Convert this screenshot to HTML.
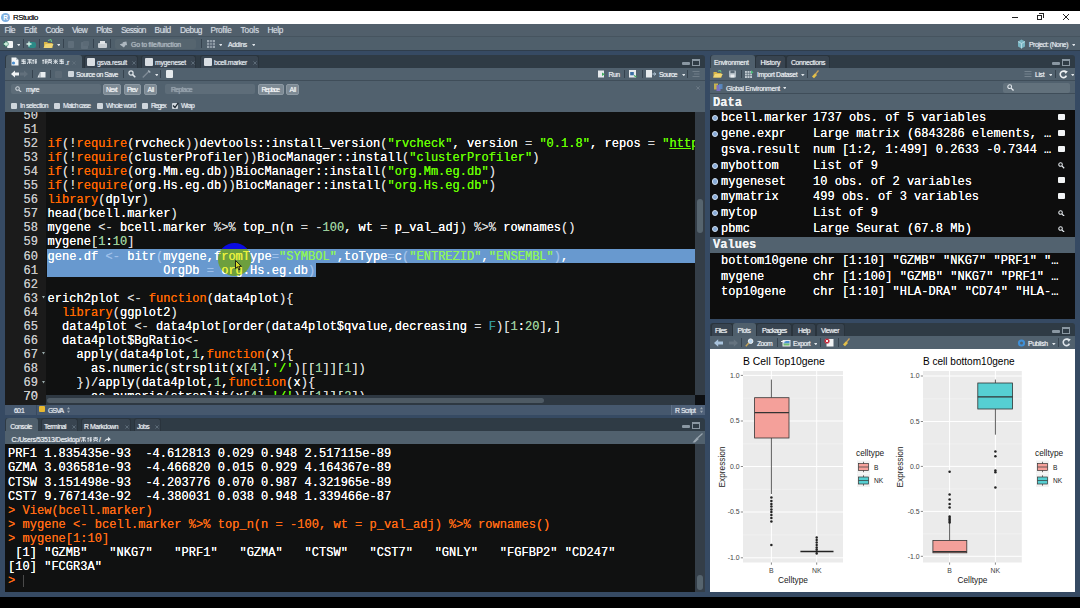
<!DOCTYPE html><html><head><meta charset="utf-8"><title>RStudio</title>
<style>
*{margin:0;padding:0;box-sizing:border-box}
html,body{width:1080px;height:608px;overflow:hidden;background:#000}
body{position:relative;font-family:"Liberation Sans",sans-serif;font-size:8px;color:#e4e9ee}
.a{position:absolute}
.t{position:absolute;white-space:pre;line-height:1}
.mono{font-family:"Liberation Mono",monospace}
.ui{font-size:8px;color:#e4e9ee;text-shadow:0 0 0.7px rgba(230,236,241,.75)}
.k{color:#ff6600}.s{color:#66ff00}.n{color:#9c9}.c{color:#399}.o{color:#d6d6d6}
.sel .o{color:#9ec0ea}.sel .s{color:#8df55a}
.cl{position:absolute;left:48px;height:14px;line-height:14px;font:12px/14px "Liberation Mono",monospace;white-space:pre;color:#fff;letter-spacing:0.03px;text-shadow:0 0 0.6px currentColor}
.ln{position:absolute;left:0;width:33px;text-align:right;height:14px;font:12px/14px "Liberation Mono",monospace;color:#c8c8c8;text-shadow:0 0 0.6px currentColor}
.con{position:absolute;left:3px;height:14px;font:12px/14px "Liberation Mono",monospace;white-space:pre;color:#fff;letter-spacing:0.03px;text-shadow:0 0 0.6px currentColor}
.ci{color:#ff6a14}
.env{position:absolute;font:12px/16px "Liberation Mono",monospace;white-space:pre;color:#fff;height:16px;letter-spacing:0.02px;text-shadow:0 0 0.6px currentColor}
.sep{position:absolute;width:1px;background:#36434f}
.pl{font-family:"Liberation Sans",sans-serif;color:#222}
</style></head><body>

<div class="a" style="left:0;top:11px;width:1080px;height:13px;background:#fff"></div>
<div class="a" style="left:0.8px;top:13.2px;width:8.8px;height:8.8px;border-radius:50%;background:#7fb0e0"></div>
<div class="t" style="left:3.2px;top:14.6px;font-size:6.5px;font-weight:bold;color:#fff">R</div>
<div class="t" style="left:13px;top:13.7px;font-size:7.8px;color:#151515;letter-spacing:-0.393px;text-shadow:0 0 0.6px rgba(0,0,0,.7)">RStudio</div>
<div class="a" style="left:1012px;top:17px;width:6px;height:1px;background:#222"></div>
<div class="a" style="left:1037px;top:15px;width:5px;height:5px;border:1px solid #222"></div>
<div class="a" style="left:1039px;top:13px;width:5px;height:5px;border-top:1px solid #222;border-right:1px solid #222"></div>
<svg class="a" style="left:1062px;top:13px" width="8" height="8"><path d="M1 1L7 7M7 1L1 7" stroke="#222" stroke-width="1"/></svg>
<div class="a" style="left:0;top:24px;width:1080px;height:13px;background:#515f6b"></div>
<div class="t" style="left:4.6px;top:25.9px;font-size:8.3px;color:#d3dae0;letter-spacing:-0.794px;text-shadow:0 0 0.8px rgba(211,218,224,.6)">File</div>
<div class="t" style="left:24px;top:25.9px;font-size:8.3px;color:#d3dae0;letter-spacing:-0.451px;text-shadow:0 0 0.8px rgba(211,218,224,.6)">Edit</div>
<div class="t" style="left:45.6px;top:25.9px;font-size:8.3px;color:#d3dae0;letter-spacing:-0.611px;text-shadow:0 0 0.8px rgba(211,218,224,.6)">Code</div>
<div class="t" style="left:71.9px;top:25.9px;font-size:8.3px;color:#d3dae0;letter-spacing:-0.685px;text-shadow:0 0 0.8px rgba(211,218,224,.6)">View</div>
<div class="t" style="left:96.3px;top:25.9px;font-size:8.3px;color:#d3dae0;letter-spacing:-0.611px;text-shadow:0 0 0.8px rgba(211,218,224,.6)">Plots</div>
<div class="t" style="left:121px;top:25.9px;font-size:8.3px;color:#d3dae0;letter-spacing:-0.676px;text-shadow:0 0 0.8px rgba(211,218,224,.6)">Session</div>
<div class="t" style="left:154.6px;top:25.9px;font-size:8.3px;color:#d3dae0;letter-spacing:-0.471px;text-shadow:0 0 0.8px rgba(211,218,224,.6)">Build</div>
<div class="t" style="left:180px;top:25.9px;font-size:8.3px;color:#d3dae0;letter-spacing:-0.492px;text-shadow:0 0 0.8px rgba(211,218,224,.6)">Debug</div>
<div class="t" style="left:210.5px;top:25.9px;font-size:8.3px;color:#d3dae0;letter-spacing:-0.361px;text-shadow:0 0 0.8px rgba(211,218,224,.6)">Profile</div>
<div class="t" style="left:240.5px;top:25.9px;font-size:8.3px;color:#d3dae0;letter-spacing:-0.175px;text-shadow:0 0 0.8px rgba(211,218,224,.6)">Tools</div>
<div class="t" style="left:267.5px;top:25.9px;font-size:8.3px;color:#d3dae0;letter-spacing:-0.393px;text-shadow:0 0 0.8px rgba(211,218,224,.6)">Help</div>
<div class="a" style="left:0px;top:36.3px;width:1080px;height:0.9px;background:#46545f;"></div>
<div class="a" style="left:0;top:37px;width:1080px;height:14px;background:#4f5f6b;border-bottom:1px solid #2f3d4b"></div>
<div class="a" style="left:0;top:51px;width:1080px;height:546px;background:#364a63"></div>
<div class="a" style="left:6.6px;top:41px;width:6.4px;height:7px;background:#f2f4f5;border-radius:1px"></div>
<svg class="a" style="left:3.2px;top:40.5px;" width="6" height="6" viewBox="0 0 6 6"><path d="M3 0.5V5.5M0.5 3H5.5" stroke="#0f6a4a" stroke-width="2.6"/><path d="M3 0.8V5.2M0.8 3H5.2" stroke="#e2f7ea" stroke-width="1.3"/></svg>
<svg class="a" style="left:16.8px;top:44.1px;" width="3.6" height="2.3" viewBox="0 0 3.6 2.3"><path d="M0 0H3.6L1.8 2.3Z" fill="#dfe5ea"/></svg>
<div class="sep" style="left:23px;top:39px;height:9px"></div>
<div class="a" style="left:27.5px;top:41.6px;width:8.5px;height:6.8px;background:#2b8a86;border-radius:2px"></div>
<svg class="a" style="left:26.3px;top:40.6px;" width="6" height="6" viewBox="0 0 6 6"><path d="M3 0.5V5.5M0.5 3H5.5" stroke="#d9f5ea" stroke-width="1.3"/></svg>
<div class="sep" style="left:39px;top:39px;height:9px"></div>
<svg class="a" style="left:43px;top:39px;" width="11" height="10" viewBox="0 0 11 10"><path d="M1 3H4L5 4H9.5V9H1Z" fill="#d9b74a"/><path d="M0.5 9L2.5 5H10.5L8.5 9Z" fill="#f0d777"/><path d="M5 1.5L8 0.5L8.5 3" fill="none" stroke="#6fd08a" stroke-width="1"/></svg>
<svg class="a" style="left:56.8px;top:44.1px;" width="3.6" height="2.3" viewBox="0 0 3.6 2.3"><path d="M0 0H3.6L1.8 2.3Z" fill="#dfe5ea"/></svg>
<div class="sep" style="left:62.5px;top:39px;height:9px"></div>
<div class="a" style="left:67.5px;top:41px;width:6.5px;height:7px;background:#5f6e7a;border-radius:1px"></div>
<div class="a" style="left:81px;top:42px;width:6.5px;height:6.5px;background:#5f6e7a;border-radius:1px"></div>
<div class="a" style="left:83px;top:40.5px;width:5.5px;height:5.5px;background:#5b6a76;border-radius:1px"></div>
<div class="sep" style="left:93px;top:39px;height:9px"></div>
<div class="a" style="left:98.3px;top:43px;width:8.4px;height:4.6px;background:#c7cdd2;border-radius:1px"></div>
<div class="a" style="left:100.2px;top:40.5px;width:4.6px;height:3.5px;background:#dfe3e6;"></div>
<div class="sep" style="left:109.5px;top:39px;height:9px"></div>
<div class="a" style="left:115px;top:39px;width:81px;height:10px;background:#56656f;border-radius:2px"></div>
<svg class="a" style="left:120px;top:40px;" width="8" height="8" viewBox="0 0 8 8"><path d="M0.5 7L3 3.5L1.5 3.5L4.5 0.5L7.5 3.5L6 3.5L6 7" fill="#aeb8c0" transform="rotate(35 4 4)"/></svg>
<div class="t ui" style="left:131px;top:41.5px;font-size:6.9px;color:#aab5bd;letter-spacing:-0.195px;">Go to file/function</div>
<div class="sep" style="left:201px;top:39px;height:9px"></div>
<svg class="a" style="left:207px;top:40px;" width="8" height="8" viewBox="0 0 8 8"><rect x="0" y="0" width="8" height="8" fill="#9aa6b0"/><path d="M0 2.7H8M0 5.3H8M2.7 0V8M5.3 0V8" stroke="#475664" stroke-width="0.8"/></svg>
<svg class="a" style="left:218.8px;top:44.1px;" width="3.6" height="2.3" viewBox="0 0 3.6 2.3"><path d="M0 0H3.6L1.8 2.3Z" fill="#dfe5ea"/></svg>
<div class="t ui" style="left:228px;top:41.5px;font-size:6.9px;letter-spacing:-0.350px;">Addins</div>
<svg class="a" style="left:251.8px;top:44.1px;" width="3.6" height="2.3" viewBox="0 0 3.6 2.3"><path d="M0 0H3.6L1.8 2.3Z" fill="#dfe5ea"/></svg>
<svg class="a" style="left:1016.8px;top:39px;" width="9" height="10" viewBox="0 0 9 10"><path d="M1 2.5L4.5 0.5L8 2.5V7.5L4.5 9.5L1 7.5Z" fill="#78b4c2"/><path d="M1 2.5L4.5 4.5L8 2.5M4.5 4.5V9.5" stroke="#cfeaf0" stroke-width="0.7" fill="none"/></svg>
<div class="t ui" style="left:1029px;top:41.5px;font-size:6.9px;letter-spacing:-0.493px;">Project: (None)</div>
<svg class="a" style="left:1071.8px;top:44.1px;" width="3.6" height="2.3" viewBox="0 0 3.6 2.3"><path d="M0 0H3.6L1.8 2.3Z" fill="#dfe5ea"/></svg>
<div class="a" style="left:5px;top:55px;width:700px;height:360px;background:#2f3b45;border-radius:3px 3px 0 0"></div>
<div class="a" style="left:6px;top:55px;width:76px;height:13px;background:#4f5f6c;border-radius:3px 3px 0 0;"></div>
<svg class="a" style="left:11px;top:57px;" width="8" height="9" viewBox="0 0 8 9"><path d="M0.5 0.5H5L7.5 3V8.5H0.5Z" fill="#f4f6f7"/><path d="M5 0.5V3H7.5" fill="#b9c4cd"/><circle cx="2.5" cy="6" r="1.6" fill="#4b8fd0"/></svg>
<svg class="a" style="left:21px;top:59.3px;" width="5.3" height="5.3" viewBox="0 0 5.3 5.3"><g transform="scale(0.757143)"><path d="M0.5 1.2H6.5M0.8 3.4H6.2M0.5 5.8H6.5M3.5 0.2V6.8M1.6 1.2V3.4M5.4 3.4V5.8" stroke="#e4e9ee" stroke-width="1.25" opacity="0.92" fill="none"/></g></svg>
<svg class="a" style="left:26.7px;top:59.3px;" width="5.3" height="5.3" viewBox="0 0 5.3 5.3"><g transform="scale(0.757143)"><path d="M0.6 0.8H6.4M1 2.6H6M3.5 0.8V6.6M1 4.4L0.4 6.6M6 4.4L6.6 6.6M1.8 4.4H5.2" stroke="#e4e9ee" stroke-width="1.25" opacity="0.92" fill="none"/></g></svg>
<svg class="a" style="left:32.4px;top:59.3px;" width="5.3" height="5.3" viewBox="0 0 5.3 5.3"><g transform="scale(0.757143)"><path d="M1.5 0.4V6.6M0.4 2H2.8M3.4 1H6.6M3.4 3H6.6M5 1V6.6M3.4 5H6.6" stroke="#e4e9ee" stroke-width="1.25" opacity="0.92" fill="none"/></g></svg>
<svg class="a" style="left:41.5px;top:59.3px;" width="5.3" height="5.3" viewBox="0 0 5.3 5.3"><g transform="scale(0.757143)"><path d="M1.5 0.4V6.6M0.4 2H2.8M3.4 1H6.6M3.4 3H6.6M5 1V6.6M3.4 5H6.6" stroke="#e4e9ee" stroke-width="1.25" opacity="0.92" fill="none"/></g></svg>
<svg class="a" style="left:47.25px;top:59.3px;" width="5.3" height="5.3" viewBox="0 0 5.3 5.3"><g transform="scale(0.757143)"><path d="M0.5 1H6.5M3.5 0.2V2.4M1 2.4H6V4.4H1ZM0.6 6.4L3 4.4M6.4 6.4L4 4.4" stroke="#e4e9ee" stroke-width="1.25" opacity="0.92" fill="none"/></g></svg>
<svg class="a" style="left:53px;top:59.3px;" width="5.3" height="5.3" viewBox="0 0 5.3 5.3"><g transform="scale(0.757143)"><path d="M0.6 3H6.4M3.5 0.4V6.6M1 0.8L2.4 2.2M6 0.8L4.6 2.2M0.6 6.4L3.2 3.6M6.4 6.4L3.8 3.6" stroke="#e4e9ee" stroke-width="1.25" opacity="0.92" fill="none"/></g></svg>
<svg class="a" style="left:58.75px;top:59.3px;" width="5.3" height="5.3" viewBox="0 0 5.3 5.3"><g transform="scale(0.757143)"><path d="M0.5 1.2H6.5M0.8 3.4H6.2M0.5 5.8H6.5M3.5 0.2V6.8M1.6 1.2V3.4M5.4 3.4V5.8" stroke="#e4e9ee" stroke-width="1.25" opacity="0.92" fill="none"/></g></svg>
<div class="t ui" style="left:65.2px;top:59.5px;font-size:6.9px;color:#e4e9ee;letter-spacing:-0.107px;">.r</div>
<svg class="a" style="left:71.8px;top:60.6px;" width="4" height="4" viewBox="0 0 4 4"><path d="M0.4 0.4L3.6 3.6M3.6 0.4L0.4 3.6" stroke="#62707d" stroke-width="0.9"/></svg>
<!--tabs-->
<div class="a" style="left:84px;top:55px;width:54px;height:13px;background:#384450;border-radius:3px 3px 0 0;border:1px solid #2a343d;border-bottom:none;"></div>
<div class="a" style="left:87px;top:57.5px;width:8px;height:8px;background:#d9dee3;border-radius:1px"></div>
<div class="t ui" style="left:97px;top:59.5px;font-size:6.9px;color:#e4e9ee;letter-spacing:-0.306px;">gsva.result</div>
<svg class="a" style="left:131.5px;top:60.6px;" width="4" height="4" viewBox="0 0 4 4"><path d="M0.4 0.4L3.6 3.6M3.6 0.4L0.4 3.6" stroke="#62707d" stroke-width="0.9"/></svg>
<div class="a" style="left:141px;top:55px;width:55px;height:13px;background:#384450;border-radius:3px 3px 0 0;border:1px solid #2a343d;border-bottom:none;"></div>
<div class="a" style="left:145px;top:57.5px;width:8px;height:8px;background:#d9dee3;border-radius:1px"></div>
<div class="t ui" style="left:155px;top:59.5px;font-size:6.9px;color:#e4e9ee;letter-spacing:-0.306px;">mygeneset</div>
<svg class="a" style="left:190.5px;top:60.6px;" width="4" height="4" viewBox="0 0 4 4"><path d="M0.4 0.4L3.6 3.6M3.6 0.4L0.4 3.6" stroke="#62707d" stroke-width="0.9"/></svg>
<div class="a" style="left:200px;top:55px;width:59px;height:13px;background:#384450;border-radius:3px 3px 0 0;border:1px solid #2a343d;border-bottom:none;"></div>
<div class="a" style="left:204px;top:57.5px;width:8px;height:8px;background:#d9dee3;border-radius:1px"></div>
<div class="t ui" style="left:214px;top:59.5px;font-size:6.9px;color:#e4e9ee;letter-spacing:-0.381px;">bcell.marker</div>
<svg class="a" style="left:252.5px;top:60.6px;" width="4" height="4" viewBox="0 0 4 4"><path d="M0.4 0.4L3.6 3.6M3.6 0.4L0.4 3.6" stroke="#62707d" stroke-width="0.9"/></svg>
<div class="a" style="left:682px;top:62.3px;width:7.5px;height:3px;background:#8a97a2;border-radius:1px"></div>
<div class="a" style="left:692px;top:59px;width:8px;height:7px;border:1px solid #8a97a2;border-top-width:2px"></div>
<div class="a" style="left:5px;top:68px;width:700px;height:12px;background:#51616e;"></div>
<svg class="a" style="left:11px;top:70px;" width="8" height="8" viewBox="0 0 8 8"><path d="M0 4L4 0.5V2.5H8V5.5H4V7.5Z" fill="#f0f3f5"/></svg>
<svg class="a" style="left:20px;top:70px;" width="8" height="8" viewBox="0 0 8 8"><path d="M8 4L4 0.5V2.5H0V5.5H4V7.5Z" fill="#62707c"/></svg>
<div class="sep" style="left:32px;top:70px;height:8px"></div>
<svg class="a" style="left:37px;top:70px;" width="9" height="8" viewBox="0 0 9 8"><path d="M0.5 7.5L3 2H8.5V7.5Z" fill="#e9edf0"/><path d="M3 2V7.5" stroke="#51616e" stroke-width="0.6"/></svg>
<div class="sep" style="left:50px;top:70px;height:8px"></div>
<div class="a" style="left:55px;top:70.5px;width:6.5px;height:7.5px;background:#5b6975;border-radius:1px"></div>
<div class="a" style="left:68px;top:71px;width:6px;height:6px;background:#cfd6dc;border-radius:1px"></div>
<div class="t ui" style="left:76px;top:72px;font-size:6.9px;color:#eef1f3;letter-spacing:-0.507px;">Source on Save</div>
<div class="sep" style="left:123px;top:70px;height:8px"></div>
<svg class="a" style="left:128px;top:70px;" width="8" height="8" viewBox="0 0 8 8"><g transform="scale(1)"><circle cx="3" cy="3" r="2.1" fill="none" stroke="#dfe5ea" stroke-width="1.2"/><path d="M4.6 4.6L7.3 7.3" stroke="#dfe5ea" stroke-width="1.5"/></g></svg>
<svg class="a" style="left:142px;top:70px;" width="9" height="8" viewBox="0 0 9 8"><path d="M0.8 7.5L7 1.2" stroke="#7e8b96" stroke-width="1.3"/><path d="M6.2 0.5L8.3 2.4" stroke="#a7b2bb" stroke-width="1.4"/></svg>
<svg class="a" style="left:154.8px;top:74.1px;" width="3.6" height="2.3" viewBox="0 0 3.6 2.3"><path d="M0 0H3.6L1.8 2.3Z" fill="#dfe5ea"/></svg>
<div class="sep" style="left:160px;top:70px;height:8px"></div>
<div class="a" style="left:166px;top:70px;width:7px;height:8px;background:#e6eaed;border-radius:1px"></div>
<svg class="a" style="left:598px;top:70px;" width="7" height="8" viewBox="0 0 7 8"><rect x="0" y="0.5" width="6" height="7" fill="#e6eaed"/><path d="M4 2.5L7 4.2L4 6Z" fill="#3fae5f"/></svg>
<div class="t ui" style="left:608.5px;top:72px;font-size:6.9px;color:#eef1f3;letter-spacing:-0.553px;">Run</div>
<div class="sep" style="left:624px;top:70px;height:8px"></div>
<svg class="a" style="left:628.5px;top:70px;" width="8" height="8" viewBox="0 0 8 8"><rect x="0" y="0" width="7" height="7.5" fill="#e6eaed"/><rect x="1.2" y="2" width="3.6" height="3.3" fill="#3a6ea5"/><path d="M5 5.5L7.5 7" stroke="#3fae5f" stroke-width="1.2"/></svg>
<div class="sep" style="left:642px;top:70px;height:8px"></div>
<svg class="a" style="left:646px;top:70px;" width="10" height="8" viewBox="0 0 10 8"><rect x="0" y="0" width="6" height="7.5" fill="#e6eaed"/><path d="M6.5 4H9.5M8.3 2.6L9.8 4L8.3 5.4" stroke="#bcd0e2" stroke-width="1" fill="none"/></svg>
<div class="t ui" style="left:659px;top:72px;font-size:6.9px;color:#eef1f3;letter-spacing:-0.644px;">Source</div>
<svg class="a" style="left:681.8px;top:74.1px;" width="3.6" height="2.3" viewBox="0 0 3.6 2.3"><path d="M0 0H3.6L1.8 2.3Z" fill="#dfe5ea"/></svg>
<div class="sep" style="left:687px;top:70px;height:8px"></div>
<svg class="a" style="left:692px;top:70px;" width="8" height="8" viewBox="0 0 8 8"><path d="M0.5 1.5H7.5M2 4H7.5M0.5 6.5H7.5" stroke="#6f7d88" stroke-width="1.1"/></svg>
<div class="a" style="left:5px;top:80px;width:700px;height:32px;background:#51616e;border-top:1px solid #3f4d59"></div>
<div class="a" style="left:11px;top:84px;width:90px;height:10px;background:#5e6d79;border-radius:2px"></div>
<svg class="a" style="left:15px;top:85.5px;" width="6.8" height="6.8" viewBox="0 0 6.8 6.8"><g transform="scale(0.85)"><circle cx="3" cy="3" r="2.1" fill="none" stroke="#cfd6dc" stroke-width="1.2"/><path d="M4.6 4.6L7.3 7.3" stroke="#cfd6dc" stroke-width="1.5"/></g></svg>
<div class="t ui" style="left:26px;top:87px;font-size:6.9px;color:#eef1f3;letter-spacing:-0.583px;">myre</div>
<div class="a" style="left:103px;top:84px;width:18px;height:10.5px;background:#7d8a94;border-radius:2px;border:1px solid #8d99a3"></div>
<div class="t ui" style="left:106px;top:86.9px;font-size:6.9px;color:#f4f6f7;letter-spacing:-0.797px;">Next</div>
<div class="a" style="left:124px;top:84px;width:17px;height:10.5px;background:#7d8a94;border-radius:2px;border:1px solid #8d99a3"></div>
<div class="t ui" style="left:127px;top:86.9px;font-size:6.9px;color:#f4f6f7;letter-spacing:-1.047px;">Prev</div>
<div class="a" style="left:144px;top:84px;width:12.5px;height:10.5px;background:#7d8a94;border-radius:2px;border:1px solid #8d99a3"></div>
<div class="t ui" style="left:147.5px;top:86.9px;font-size:6.9px;color:#f4f6f7;letter-spacing:-0.390px;">All</div>
<div class="a" style="left:165px;top:84px;width:90px;height:10px;background:#5e6d79;border-radius:2px"></div>
<div class="t ui" style="left:171px;top:87px;font-size:6.9px;color:#8d9aa5;letter-spacing:-0.617px;">Replace</div>
<div class="a" style="left:258px;top:84px;width:26px;height:10.5px;background:#7d8a94;border-radius:2px;border:1px solid #8d99a3"></div>
<div class="t ui" style="left:261.5px;top:86.9px;font-size:6.9px;color:#f4f6f7;letter-spacing:-1.117px;">Replace</div>
<div class="a" style="left:286px;top:84px;width:13px;height:10.5px;background:#7d8a94;border-radius:2px;border:1px solid #8d99a3"></div>
<div class="t ui" style="left:289.5px;top:86.9px;font-size:6.9px;color:#f4f6f7;letter-spacing:-0.390px;">All</div>
<svg class="a" style="left:695.5px;top:85.6px;" width="4" height="4" viewBox="0 0 4 4"><path d="M0.4 0.4L3.6 3.6M3.6 0.4L0.4 3.6" stroke="#6f7d89" stroke-width="0.9"/></svg>
<div class="a" style="left:11px;top:102.5px;width:6px;height:6px;background:#cfd6dc;border-radius:1px"></div>
<div class="t ui" style="left:20px;top:103.1px;font-size:6.9px;color:#e4e9ee;letter-spacing:-0.575px;">In selection</div>
<div class="a" style="left:54px;top:102.5px;width:6px;height:6px;background:#cfd6dc;border-radius:1px"></div>
<div class="t ui" style="left:63px;top:103.1px;font-size:6.9px;color:#e4e9ee;letter-spacing:-0.788px;">Match case</div>
<div class="a" style="left:97px;top:102.5px;width:6px;height:6px;background:#cfd6dc;border-radius:1px"></div>
<div class="t ui" style="left:106px;top:103.1px;font-size:6.9px;color:#e4e9ee;letter-spacing:-0.663px;">Whole word</div>
<div class="a" style="left:142px;top:102.5px;width:6px;height:6px;background:#cfd6dc;border-radius:1px"></div>
<div class="t ui" style="left:151px;top:103.1px;font-size:6.9px;color:#e4e9ee;letter-spacing:-1.029px;">Regex</div>
<div class="a" style="left:171.5px;top:102.5px;width:6px;height:6px;background:#cfd6dc;border-radius:1px"></div>
<svg class="a" style="left:171.5px;top:101.5px;" width="7" height="7" viewBox="0 0 7 7"><path d="M1 3.5L3 5.5L6.3 0.8" fill="none" stroke="#1d2730" stroke-width="1.3"/></svg>
<div class="t ui" style="left:181px;top:103.1px;font-size:6.9px;color:#e4e9ee;letter-spacing:-0.840px;">Wrap</div>
<div class="a" style="left:5px;top:112px;width:690px;height:283px;background:#101111;overflow:hidden">
<div class="a" style="left:0;top:0;width:41px;height:284px;background:#1b1b1b"></div>
<div class="a" style="left:42px;top:137px;width:648px;height:14px;background:#6899cf"></div>
<div class="a" style="left:42px;top:151px;width:269px;height:14px;background:#6899cf"></div>
<div class="ln" style="top:-3.20px">50</div>
<div class="cl" style="left:42.6px;top:-3.20px"></div>
<div class="ln" style="top:10.87px">51</div>
<div class="cl" style="left:42.6px;top:10.87px"></div>
<div class="ln" style="top:24.94px">52</div>
<div class="cl" style="left:42.6px;top:24.94px"><span class="k">if</span><span class="o">(</span><span class="o">!</span><span class="k">require</span><span class="o">(</span>rvcheck<span class="o">)</span><span class="o">)</span>devtools::install_version<span class="o">(</span><span class="s">"rvcheck"</span>, version <span class="o">=</span> <span class="s">"0.1.8"</span>, repos <span class="o">=</span> <span class="s">"<u>http</u></span></div>
<div class="ln" style="top:39.01px">53</div>
<div class="cl" style="left:42.6px;top:39.01px"><span class="k">if</span><span class="o">(</span><span class="o">!</span><span class="k">require</span><span class="o">(</span>clusterProfiler<span class="o">)</span><span class="o">)</span>BiocManager::install<span class="o">(</span><span class="s">"clusterProfiler"</span><span class="o">)</span></div>
<div class="ln" style="top:53.08px">54</div>
<div class="cl" style="left:42.6px;top:53.08px"><span class="k">if</span><span class="o">(</span><span class="o">!</span><span class="k">require</span><span class="o">(</span>org.Mm.eg.db<span class="o">)</span><span class="o">)</span>BiocManager::install<span class="o">(</span><span class="s">"org.Mm.eg.db"</span><span class="o">)</span></div>
<div class="ln" style="top:67.15px">55</div>
<div class="cl" style="left:42.6px;top:67.15px"><span class="k">if</span><span class="o">(</span><span class="o">!</span><span class="k">require</span><span class="o">(</span>org.Hs.eg.db<span class="o">)</span><span class="o">)</span>BiocManager::install<span class="o">(</span><span class="s">"org.Hs.eg.db"</span><span class="o">)</span></div>
<div class="ln" style="top:81.22px">56</div>
<div class="cl" style="left:42.6px;top:81.22px"><span class="k">library</span><span class="o">(</span>dplyr<span class="o">)</span></div>
<div class="ln" style="top:95.29px">57</div>
<div class="cl" style="left:42.6px;top:95.29px">head<span class="o">(</span>bcell.marker<span class="o">)</span></div>
<div class="ln" style="top:109.36px">58</div>
<div class="cl" style="left:42.6px;top:109.36px">mygene <span class="o">&lt;</span><span class="o">-</span> bcell.marker <span class="o">%</span><span class="o">&gt;</span><span class="o">%</span> top_n<span class="o">(</span>n <span class="o">=</span> <span class="o">-</span><span class="n">100</span>, wt <span class="o">=</span> p_val_adj<span class="o">)</span> <span class="o">%</span><span class="o">&gt;</span><span class="o">%</span> rownames<span class="o">(</span><span class="o">)</span></div>
<div class="ln" style="top:123.43px">59</div>
<div class="cl" style="left:42.6px;top:123.43px">mygene<span class="o">[</span><span class="n">1</span>:<span class="n">10</span><span class="o">]</span></div>
<div class="ln" style="top:137.50px">60</div>
<div class="cl sel" style="left:42.6px;top:137.50px">gene.df <span class="o">&lt;</span><span class="o">-</span> bitr<span class="o">(</span>mygene,fromType<span class="o">=</span><span class="s">"SYMBOL"</span>,toType<span class="o">=</span>c<span class="o">(</span><span class="s">"ENTREZID"</span>,<span class="s">"ENSEMBL"</span><span class="o">)</span>,</div>
<div class="ln" style="top:151.57px">61</div>
<div class="cl sel" style="left:42.6px;top:151.57px">                OrgDb <span class="o">=</span> org.Hs.eg.db<span class="o">)</span></div>
<div class="ln" style="top:165.64px">62</div>
<div class="cl" style="left:42.6px;top:165.64px"></div>
<div class="ln" style="top:179.71px">63</div>
<svg class="a" style="left:36.5px;top:184.21px;" width="3" height="3" viewBox="0 0 3 3"><path d="M0 0H3L1.5 2.5Z" fill="#9aa"/></svg>
<div class="cl" style="left:42.6px;top:179.71px">erich2plot <span class="o">&lt;</span><span class="o">-</span> <span class="k">function</span><span class="o">(</span>data4plot<span class="o">)</span><span class="o">{</span></div>
<div class="ln" style="top:193.78px">64</div>
<div class="cl" style="left:42.6px;top:193.78px">  <span class="k">library</span><span class="o">(</span>ggplot2<span class="o">)</span></div>
<div class="ln" style="top:207.85px">65</div>
<div class="cl" style="left:42.6px;top:207.85px">  data4plot <span class="o">&lt;</span><span class="o">-</span> data4plot<span class="o">[</span>order<span class="o">(</span>data4plot$qvalue,decreasing <span class="o">=</span> <span class="c">F</span><span class="o">)</span><span class="o">[</span><span class="n">1</span>:<span class="n">20</span><span class="o">]</span>,<span class="o">]</span></div>
<div class="ln" style="top:221.92px">66</div>
<div class="cl" style="left:42.6px;top:221.92px">  data4plot$BgRatio<span class="o">&lt;</span><span class="o">-</span></div>
<div class="ln" style="top:235.99px">67</div>
<svg class="a" style="left:36.5px;top:240.49px;" width="3" height="3" viewBox="0 0 3 3"><path d="M0 0H3L1.5 2.5Z" fill="#9aa"/></svg>
<div class="cl" style="left:42.6px;top:235.99px">    apply<span class="o">(</span>data4plot,<span class="n">1</span>,<span class="k">function</span><span class="o">(</span>x<span class="o">)</span><span class="o">{</span></div>
<div class="ln" style="top:250.06px">68</div>
<div class="cl" style="left:42.6px;top:250.06px">      as.numeric<span class="o">(</span>strsplit<span class="o">(</span>x<span class="o">[</span><span class="n">4</span><span class="o">]</span>,<span class="s">'/'</span><span class="o">)</span><span class="o">[</span><span class="o">[</span><span class="n">1</span><span class="o">]</span><span class="o">]</span><span class="o">[</span><span class="n">1</span><span class="o">]</span><span class="o">)</span></div>
<div class="ln" style="top:264.13px">69</div>
<svg class="a" style="left:36.5px;top:268.63px;" width="3" height="3" viewBox="0 0 3 3"><path d="M0 0H3L1.5 2.5Z" fill="#9aa"/></svg>
<div class="cl" style="left:42.6px;top:264.13px">    <span class="o">}</span><span class="o">)</span><span class="o">/</span>apply<span class="o">(</span>data4plot,<span class="n">1</span>,<span class="k">function</span><span class="o">(</span>x<span class="o">)</span><span class="o">{</span></div>
<div class="ln" style="top:278.20px">70</div>
<div class="cl" style="left:42.6px;top:278.20px">      as.numeric<span class="o">(</span>strsplit<span class="o">(</span>x<span class="o">[</span><span class="n">4</span><span class="o">]</span>,<span class="s">'/'</span><span class="o">)</span><span class="o">[</span><span class="o">[</span><span class="n">1</span><span class="o">]</span><span class="o">]</span><span class="o">[</span><span class="n">2</span><span class="o">]</span><span class="o">)</span></div>
</div>
<div class="a" style="left:218px;top:243px;width:33px;height:6px;overflow:hidden"><div class="a" style="left:0;top:0;width:33px;height:33px;border-radius:50%;background:#0b0be0"></div></div>
<div class="a" style="left:218px;top:249px;width:33px;height:28px;overflow:hidden;mix-blend-mode:normal"><div class="a" style="left:0;top:-6px;width:33px;height:33px;border-radius:50%;background:rgba(110,160,20,0.78)"></div></div>
<div class="a" style="left:218px;top:249px;width:33px;height:28px;overflow:hidden"><div class="a" style="left:0;top:-6px;width:33px;height:33px;border-radius:50%;overflow:hidden">
<div class="cl" style="left:-170.4px;top:6.5px;color:#e6f03c">gene.df &lt;- bitr(mygene,fromType="SYMBOL",toType=c("ENTREZID","ENSEMBL"),</div>
<div class="cl" style="left:-170.4px;top:20.57px;color:#e6f03c">                OrgDb = org.Hs.eg.db)</div>
</div></div>
<svg class="a" style="left:235px;top:260.3px;" width="7" height="11" viewBox="0 0 7 11"><path d="M0.5 0.5V8.6L2.5 6.8L3.8 9.8L5.1 9.2L3.8 6.3H6.4Z" fill="#d8dc2a" stroke="#111" stroke-width="0.9"/></svg>
<div class="a" style="left:695px;top:112px;width:10px;height:283px;background:#343e48;"></div>
<div class="a" style="left:697px;top:199px;width:6px;height:34px;background:#56646e;border-radius:3px"></div>
<div class="a" style="left:5px;top:395px;width:41px;height:10px;background:#1b1b1b;"></div>
<div class="a" style="left:46px;top:395px;width:649px;height:10px;background:#2e3842;"></div>
<div class="a" style="left:47px;top:397.5px;width:497px;height:5px;background:#4e5a64;border-radius:2.5px"></div>
<div class="a" style="left:695px;top:395px;width:10px;height:10px;background:#0d0f12;"></div>
<div class="a" style="left:5px;top:405px;width:700px;height:9.6px;background:#46586e;"></div>
<div class="a" style="left:36px;top:405px;width:1px;height:9.6px;background:#394a5e;"></div>
<div class="ln" style="left:5px;top:389.70px;height:13px;overflow:hidden">70</div>
<div class="t ui" style="left:14px;top:408px;font-size:6.9px;color:#e4e9ee;letter-spacing:-0.857px;">60:1</div>
<div class="a" style="left:39px;top:406px;width:6px;height:6px;background:#e8b830;border-radius:1px"></div>
<div class="t ui" style="left:48px;top:408px;font-size:6.9px;color:#e4e9ee;letter-spacing:-0.816px;">GSVA</div>
<svg class="a" style="left:67px;top:407px;" width="3" height="6" viewBox="0 0 3 6"><path d="M0 2.2L1.5 0L3 2.2ZM0 3.8L1.5 6L3 3.8Z" fill="#9aa6b0"/></svg>
<div class="a" style="left:671px;top:405px;width:34px;height:9.6px;background:#50627a;border-left:1px solid #5f7188"></div>
<div class="t ui" style="left:675px;top:408px;font-size:6.9px;color:#e4e9ee;letter-spacing:-0.505px;">R Script</div>
<svg class="a" style="left:700px;top:407px;" width="3" height="6" viewBox="0 0 3 6"><path d="M0 2.2L1.5 0L3 2.2ZM0 3.8L1.5 6L3 3.8Z" fill="#9aa6b0"/></svg>
<div class="a" style="left:5px;top:418px;width:700px;height:174px;background:#2f3b45;border-radius:3px 3px 0 0"></div>
<div class="a" style="left:6px;top:418px;width:32px;height:13px;background:#4f5f6c;border-radius:3px 3px 0 0;"></div>
<div class="t ui" style="left:10.2px;top:423.8px;font-size:6.9px;color:#eef1f3;letter-spacing:-0.517px;">Console</div>
<div class="a" style="left:41px;top:418px;width:37px;height:13px;background:#384450;border-radius:3px 3px 0 0;border:1px solid #2a343d;border-bottom:none;"></div>
<div class="t ui" style="left:44px;top:423.8px;font-size:6.9px;color:#eef1f3;letter-spacing:-0.484px;">Terminal</div>
<svg class="a" style="left:71.5px;top:425.1px;" width="4" height="4" viewBox="0 0 4 4"><path d="M0.4 0.4L3.6 3.6M3.6 0.4L0.4 3.6" stroke="#62707d" stroke-width="0.9"/></svg>
<div class="a" style="left:81px;top:418px;width:50px;height:13px;background:#384450;border-radius:3px 3px 0 0;border:1px solid #2a343d;border-bottom:none;"></div>
<div class="t ui" style="left:84px;top:423.8px;font-size:6.9px;color:#eef1f3;letter-spacing:-0.443px;">R Markdown</div>
<svg class="a" style="left:124.5px;top:425.1px;" width="4" height="4" viewBox="0 0 4 4"><path d="M0.4 0.4L3.6 3.6M3.6 0.4L0.4 3.6" stroke="#62707d" stroke-width="0.9"/></svg>
<div class="a" style="left:134px;top:418px;width:27px;height:13px;background:#384450;border-radius:3px 3px 0 0;border:1px solid #2a343d;border-bottom:none;"></div>
<div class="t ui" style="left:137px;top:423.8px;font-size:6.9px;color:#eef1f3;letter-spacing:-0.644px;">Jobs</div>
<svg class="a" style="left:154.5px;top:425.1px;" width="4" height="4" viewBox="0 0 4 4"><path d="M0.4 0.4L3.6 3.6M3.6 0.4L0.4 3.6" stroke="#62707d" stroke-width="0.9"/></svg>
<div class="a" style="left:682px;top:425.3px;width:7.5px;height:3px;background:#8a97a2;border-radius:1px"></div>
<div class="a" style="left:692px;top:422px;width:8px;height:7px;border:1px solid #8a97a2;border-top-width:2px"></div>
<div class="a" style="left:5px;top:431px;width:700px;height:13px;background:#51616e;"></div>
<div class="t ui" style="left:11.5px;top:436.8px;font-size:6.9px;color:#eef1f3;letter-spacing:-0.352px;">C:/Users/53513/Desktop/</div>
<svg class="a" style="left:81.3px;top:436.6px;" width="5.2" height="5.2" viewBox="0 0 5.2 5.2"><g transform="scale(0.742857)"><path d="M0.6 0.8H6.4M1 2.6H6M3.5 0.8V6.6M1 4.4L0.4 6.6M6 4.4L6.6 6.6M1.8 4.4H5.2" stroke="#e4e9ee" stroke-width="1.25" opacity="0.92" fill="none"/></g></svg>
<svg class="a" style="left:87px;top:436.6px;" width="5.2" height="5.2" viewBox="0 0 5.2 5.2"><g transform="scale(0.742857)"><path d="M1.5 0.4V6.6M0.4 2H2.8M3.4 1H6.6M3.4 3H6.6M5 1V6.6M3.4 5H6.6" stroke="#e4e9ee" stroke-width="1.25" opacity="0.92" fill="none"/></g></svg>
<svg class="a" style="left:92.7px;top:436.6px;" width="5.2" height="5.2" viewBox="0 0 5.2 5.2"><g transform="scale(0.742857)"><path d="M0.5 1H6.5M3.5 0.2V2.4M1 2.4H6V4.4H1ZM0.6 6.4L3 4.4M6.4 6.4L4 4.4" stroke="#e4e9ee" stroke-width="1.25" opacity="0.92" fill="none"/></g></svg>
<div class="t ui" style="left:99px;top:436.8px;font-size:6.9px;color:#eef1f3;letter-spacing:0.583px;">/</div>
<svg class="a" style="left:104px;top:436px;" width="7" height="7" viewBox="0 0 7 7"><path d="M0.5 6.5C0.5 3.5 2 2.5 4 2.5V0.8L6.8 3.2L4 5.6V4C2.5 4 1.2 4.5 0.5 6.5Z" fill="#dfe5ea"/></svg>
<svg class="a" style="left:692px;top:433px;" width="11" height="10" viewBox="0 0 11 10"><path d="M10.5 0.5L5.5 5" stroke="#9aa6b0" stroke-width="1.2"/><path d="M0.5 9.5L5 4.3L6.8 6L3 9.5Z" fill="#9aa6b0"/></svg>
<div class="a" style="left:5px;top:444px;width:690px;height:148px;background:#101111;"></div>
<div class="a" style="left:695px;top:444px;width:10px;height:148px;background:#343e48;"></div>
<div class="a" style="left:697px;top:575px;width:6px;height:15px;background:#56646e;border-radius:3px"></div>
<div class="con" style="left:8px;top:447.40px">PRF1 1.835435e-93  -4.612813 0.029 0.948 2.517115e-89</div>
<div class="con" style="left:8px;top:461.48px">GZMA 3.036581e-93  -4.466820 0.015 0.929 4.164367e-89</div>
<div class="con" style="left:8px;top:475.56px">CTSW 3.151498e-93  -4.203776 0.070 0.987 4.321965e-89</div>
<div class="con" style="left:8px;top:489.64px">CST7 9.767143e-92  -4.380031 0.038 0.948 1.339466e-87</div>
<div class="con ci" style="left:8px;top:503.72px">&gt; View(bcell.marker)</div>
<div class="con ci" style="left:8px;top:517.80px">&gt; mygene &lt;- bcell.marker %&gt;% top_n(n = -100, wt = p_val_adj) %&gt;% rownames()</div>
<div class="con ci" style="left:8px;top:531.88px">&gt; mygene[1:10]</div>
<div class="con" style="left:8px;top:545.96px"> [1] "GZMB"   "NKG7"   "PRF1"   "GZMA"   "CTSW"   "CST7"   "GNLY"   "FGFBP2" "CD247" </div>
<div class="con" style="left:8px;top:560.04px">[10] "FCGR3A"</div>
<div class="con ci" style="left:8px;top:574.12px">&gt; </div>
<div class="a" style="left:23px;top:575px;width:1px;height:12px;background:#4a4a4a;"></div>
<div class="a" style="left:710px;top:55px;width:365px;height:264px;background:#2f3b45;border-radius:3px 3px 0 0"></div>
<div class="a" style="left:711px;top:55px;width:44px;height:13px;background:#4f5f6c;border-radius:3px 3px 0 0;"></div>
<div class="t ui" style="left:714px;top:59.5px;font-size:6.9px;color:#eef1f3;letter-spacing:-0.385px;">Environment</div>
<div class="a" style="left:755px;top:55px;width:31px;height:13px;background:#384450;border-radius:3px 3px 0 0;border:1px solid #2a343d;border-bottom:none;"></div>
<div class="t ui" style="left:760.5px;top:59.5px;font-size:6.9px;color:#eef1f3;letter-spacing:-0.253px;">History</div>
<div class="a" style="left:786px;top:55px;width:43.5px;height:13px;background:#384450;border-radius:3px 3px 0 0;border:1px solid #2a343d;border-bottom:none;"></div>
<div class="t ui" style="left:791px;top:59.5px;font-size:6.9px;color:#eef1f3;letter-spacing:-0.378px;">Connections</div>
<div class="a" style="left:1052px;top:62.3px;width:7.5px;height:3px;background:#8a97a2;border-radius:1px"></div>
<div class="a" style="left:1062px;top:59px;width:8px;height:7px;border:1px solid #8a97a2;border-top-width:2px"></div>
<div class="a" style="left:710px;top:68px;width:365px;height:12px;background:#51616e;"></div>
<svg class="a" style="left:713px;top:70px;" width="10" height="8" viewBox="0 0 10 8"><path d="M0.5 2H3.5L4.5 3H8.5V7.5H0.5Z" fill="#d9b74a"/><path d="M0 7.5L2 4H9.8L7.8 7.5Z" fill="#f0d777"/><path d="M5 1.2L7.5 0.4L8 2.4" fill="none" stroke="#6fd08a" stroke-width="0.9"/></svg>
<svg class="a" style="left:729px;top:70px;" width="7" height="8" viewBox="0 0 7 8"><rect x="0" y="0.5" width="7" height="7" rx="0.8" fill="#aeb9c2"/><rect x="1.5" y="0.5" width="4" height="2.5" fill="#5b6a77"/><rect x="1.5" y="4.5" width="4" height="3" fill="#e9edf0"/></svg>
<div class="sep" style="left:741px;top:70px;height:8px"></div>
<svg class="a" style="left:745px;top:70px;" width="9" height="8" viewBox="0 0 9 8"><rect x="0" y="1" width="7" height="7" fill="#c3ccd3"/><path d="M0 3.3H7M0 5.6H7M2.3 1V8M4.7 1V8" stroke="#51616e" stroke-width="0.6"/><path d="M6 0.3L8.5 2.2L6 4Z" fill="#4fc07a"/></svg>
<div class="t ui" style="left:757px;top:72px;font-size:6.9px;color:#eef1f3;letter-spacing:-0.339px;">Import Dataset</div>
<svg class="a" style="left:801.3px;top:74.1px;" width="3.6" height="2.3" viewBox="0 0 3.6 2.3"><path d="M0 0H3.6L1.8 2.3Z" fill="#dfe5ea"/></svg>
<div class="sep" style="left:807px;top:70px;height:8px"></div>
<svg class="a" style="left:811px;top:69.5px;" width="9" height="9" viewBox="0 0 9 9"><path d="M7.5 0.5L4.5 4" stroke="#c9a25a" stroke-width="1.3"/><path d="M1 6.5L4 3.2L6 5L3 8.3Z" fill="#e3c04a"/></svg>
<svg class="a" style="left:1024px;top:70px;" width="8" height="8" viewBox="0 0 8 8"><path d="M0.5 1.5H7.5M0.5 4H7.5M0.5 6.5H7.5" stroke="#75838e" stroke-width="1"/></svg>
<div class="t ui" style="left:1035px;top:72px;font-size:6.9px;color:#eef1f3;letter-spacing:-0.384px;">List</div>
<svg class="a" style="left:1048.8px;top:74.1px;" width="3.6" height="2.3" viewBox="0 0 3.6 2.3"><path d="M0 0H3.6L1.8 2.3Z" fill="#dfe5ea"/></svg>
<div class="sep" style="left:1055px;top:70px;height:8px"></div>
<svg class="a" style="left:1059px;top:69.5px;" width="9" height="9" viewBox="0 0 9 9"><path d="M7.4 5.6A3.2 3.2 0 1 1 6.8 2.2" fill="none" stroke="#eef1f3" stroke-width="1.6"/><path d="M5.2 0.2L8.8 1.2L6.6 4Z" fill="#eef1f3"/></svg>
<svg class="a" style="left:1070.8px;top:74.1px;" width="3.6" height="2.3" viewBox="0 0 3.6 2.3"><path d="M0 0H3.6L1.8 2.3Z" fill="#dfe5ea"/></svg>
<div class="a" style="left:710px;top:80px;width:365px;height:14px;background:#51616e;border-top:1px solid #3f4d59;border-bottom:1px solid #3f4d59"></div>
<svg class="a" style="left:714px;top:83px;" width="9" height="8" viewBox="0 0 9 8"><rect x="0" y="0.5" width="4" height="6" fill="#c5b24f"/><rect x="2.5" y="2" width="4" height="6" fill="#7c6fc0"/><rect x="5" y="1" width="3.5" height="5" fill="#5a8fcc" opacity="0.8"/></svg>
<div class="t ui" style="left:726px;top:85.5px;font-size:6.9px;color:#eef1f3;letter-spacing:-0.367px;">Global Environment</div>
<svg class="a" style="left:782.8px;top:87.1px;" width="3.6" height="2.3" viewBox="0 0 3.6 2.3"><path d="M0 0H3.6L1.8 2.3Z" fill="#dfe5ea"/></svg>
<div class="a" style="left:1003px;top:83px;width:67px;height:9.5px;background:#62717c;border-radius:2px"></div>
<svg class="a" style="left:1007px;top:84px;" width="7.2" height="7.2" viewBox="0 0 7.2 7.2"><g transform="scale(0.9)"><circle cx="3" cy="3" r="2.1" fill="none" stroke="#e4e9ee" stroke-width="1.2"/><path d="M4.6 4.6L7.3 7.3" stroke="#e4e9ee" stroke-width="1.5"/></g></svg>
<div class="a" style="left:710px;top:94px;width:365px;height:225px;background:#0d0d0d;"></div>
<div class="a" style="left:710px;top:94px;width:365px;height:16px;background:#52626f;"></div>
<div class="env" style="left:713px;top:94.7px;font-size:12px;font-weight:bold;color:#f2f4f5">Data</div>
<div class="a" style="left:712px;top:115px;width:6.2px;height:6.2px;border-radius:50%;background:#86a9d6;border:1.3px solid #cfdff0"></div>
<div class="env" style="left:721px;top:110.1px">bcell.marker</div>
<div class="env" style="left:813px;top:110.1px">1737 obs. of 5 variables</div>
<div class="a" style="left:1058px;top:113.9px;width:7px;height:6px;background:#f2f4f5;border-radius:1px"></div>
<div class="a" style="left:712px;top:130.85px;width:6.2px;height:6.2px;border-radius:50%;background:#86a9d6;border:1.3px solid #cfdff0"></div>
<div class="env" style="left:721px;top:125.95px">gene.expr</div>
<div class="env" style="left:813px;top:125.95px">Large matrix (6843286 elements, …</div>
<div class="a" style="left:1058px;top:129.75px;width:7px;height:6px;background:#f2f4f5;border-radius:1px"></div>
<div class="env" style="left:721px;top:141.8px">gsva.result</div>
<div class="env" style="left:813px;top:141.8px">num [1:2, 1:499] 0.2633 -0.7344 …</div>
<div class="a" style="left:1058px;top:145.6px;width:7px;height:6px;background:#f2f4f5;border-radius:1px"></div>
<div class="a" style="left:712px;top:162.55px;width:6.2px;height:6.2px;border-radius:50%;background:#86a9d6;border:1.3px solid #cfdff0"></div>
<div class="env" style="left:721px;top:157.65px">mybottom</div>
<div class="env" style="left:813px;top:157.65px">List of 9</div>
<svg class="a" style="left:1058px;top:162.15px;" width="6.8" height="6.8" viewBox="0 0 6.8 6.8"><g transform="scale(0.85)"><circle cx="3" cy="3" r="2.1" fill="none" stroke="#e8edf1" stroke-width="1.2"/><path d="M4.6 4.6L7.3 7.3" stroke="#e8edf1" stroke-width="1.5"/></g></svg>
<div class="a" style="left:712px;top:178.4px;width:6.2px;height:6.2px;border-radius:50%;background:#86a9d6;border:1.3px solid #cfdff0"></div>
<div class="env" style="left:721px;top:173.5px">mygeneset</div>
<div class="env" style="left:813px;top:173.5px">10 obs. of 2 variables</div>
<div class="a" style="left:1058px;top:177.3px;width:7px;height:6px;background:#f2f4f5;border-radius:1px"></div>
<div class="a" style="left:712px;top:194.25px;width:6.2px;height:6.2px;border-radius:50%;background:#86a9d6;border:1.3px solid #cfdff0"></div>
<div class="env" style="left:721px;top:189.35px">mymatrix</div>
<div class="env" style="left:813px;top:189.35px">499 obs. of 3 variables</div>
<div class="a" style="left:1058px;top:193.15px;width:7px;height:6px;background:#f2f4f5;border-radius:1px"></div>
<div class="a" style="left:712px;top:210.1px;width:6.2px;height:6.2px;border-radius:50%;background:#86a9d6;border:1.3px solid #cfdff0"></div>
<div class="env" style="left:721px;top:205.2px">mytop</div>
<div class="env" style="left:813px;top:205.2px">List of 9</div>
<svg class="a" style="left:1058px;top:209.7px;" width="6.8" height="6.8" viewBox="0 0 6.8 6.8"><g transform="scale(0.85)"><circle cx="3" cy="3" r="2.1" fill="none" stroke="#e8edf1" stroke-width="1.2"/><path d="M4.6 4.6L7.3 7.3" stroke="#e8edf1" stroke-width="1.5"/></g></svg>
<div class="a" style="left:712px;top:225.95px;width:6.2px;height:6.2px;border-radius:50%;background:#86a9d6;border:1.3px solid #cfdff0"></div>
<div class="env" style="left:721px;top:221.05px">pbmc</div>
<div class="env" style="left:813px;top:221.05px">Large Seurat (67.8 Mb)</div>
<svg class="a" style="left:1058px;top:225.55px;" width="6.8" height="6.8" viewBox="0 0 6.8 6.8"><g transform="scale(0.85)"><circle cx="3" cy="3" r="2.1" fill="none" stroke="#e8edf1" stroke-width="1.2"/><path d="M4.6 4.6L7.3 7.3" stroke="#e8edf1" stroke-width="1.5"/></g></svg>
<div class="a" style="left:710px;top:236.8px;width:365px;height:15.85px;background:#52626f;"></div>
<div class="env" style="left:713px;top:236.6px;font-size:12px;font-weight:bold;color:#f2f4f5">Values</div>
<div class="env" style="left:721px;top:252.75px">bottom10gene</div>
<div class="env" style="left:813px;top:252.75px">chr [1:10] "GZMB" "NKG7" "PRF1" "…</div>
<div class="env" style="left:721px;top:268.6px">mygene</div>
<div class="env" style="left:813px;top:268.6px">chr [1:100] "GZMB" "NKG7" "PRF1" …</div>
<div class="env" style="left:721px;top:284.45px">top10gene</div>
<div class="env" style="left:813px;top:284.45px">chr [1:10] "HLA-DRA" "CD74" "HLA-…</div>
<div class="a" style="left:710px;top:323px;width:365px;height:269px;background:#2f3b45;border-radius:3px 3px 0 0"></div>
<div class="a" style="left:711px;top:323px;width:22px;height:13px;background:#384450;border-radius:3px 3px 0 0;border:1px solid #2a343d;border-bottom:none;"></div>
<div class="t ui" style="left:715px;top:327.5px;font-size:6.9px;color:#eef1f3;letter-spacing:-0.574px;">Files</div>
<div class="a" style="left:733px;top:323px;width:23px;height:13px;background:#4f5f6c;border-radius:3px 3px 0 0;"></div>
<div class="t ui" style="left:737.5px;top:327.5px;font-size:6.9px;color:#eef1f3;letter-spacing:-0.468px;">Plots</div>
<div class="a" style="left:756px;top:323px;width:36px;height:13px;background:#384450;border-radius:3px 3px 0 0;border:1px solid #2a343d;border-bottom:none;"></div>
<div class="t ui" style="left:762px;top:327.5px;font-size:6.9px;color:#eef1f3;letter-spacing:-0.713px;">Packages</div>
<div class="a" style="left:792px;top:323px;width:24px;height:13px;background:#384450;border-radius:3px 3px 0 0;border:1px solid #2a343d;border-bottom:none;"></div>
<div class="t ui" style="left:798px;top:327.5px;font-size:6.9px;color:#eef1f3;letter-spacing:-0.498px;">Help</div>
<div class="a" style="left:816px;top:323px;width:29px;height:13px;background:#384450;border-radius:3px 3px 0 0;border:1px solid #2a343d;border-bottom:none;"></div>
<div class="t ui" style="left:821px;top:327.5px;font-size:6.9px;color:#eef1f3;letter-spacing:-0.495px;">Viewer</div>
<div class="a" style="left:1052px;top:330.3px;width:7.5px;height:3px;background:#8a97a2;border-radius:1px"></div>
<div class="a" style="left:1062px;top:327px;width:8px;height:7px;border:1px solid #8a97a2;border-top-width:2px"></div>
<div class="a" style="left:710px;top:336px;width:365px;height:13px;background:#51616e;"></div>
<svg class="a" style="left:714px;top:338.5px;" width="9" height="8" viewBox="0 0 9 8"><path d="M0 4L4.2 0.3V2.4H9V5.6H4.2V7.7Z" fill="#a9c3dc"/></svg>
<svg class="a" style="left:729px;top:338.5px;" width="9" height="8" viewBox="0 0 9 8"><path d="M9 4L4.8 0.3V2.4H0V5.6H4.8V7.7Z" fill="#65737f"/></svg>
<div class="sep" style="left:741px;top:338px;height:9px"></div>
<svg class="a" style="left:745px;top:338px;" width="9" height="9" viewBox="0 0 9 9"><circle cx="5.6" cy="3.2" r="2.3" fill="#b9d6ee" stroke="#eef1f3" stroke-width="1"/><path d="M3.8 5L0.8 8.2" stroke="#c2a35a" stroke-width="1.5"/></svg>
<div class="t ui" style="left:757px;top:341px;font-size:6.9px;color:#eef1f3;letter-spacing:-0.660px;">Zoom</div>
<div class="sep" style="left:777px;top:338px;height:9px"></div>
<svg class="a" style="left:781px;top:338px;" width="10" height="9" viewBox="0 0 10 9"><rect x="1.5" y="2" width="8" height="6.5" fill="#e6eaed"/><rect x="2.5" y="3" width="6" height="2.5" fill="#4b8fd0"/><rect x="2.5" y="5.5" width="6" height="2" fill="#6fbf73"/><path d="M0 3.5H3.5M2.3 2L3.8 3.5L2.3 5" stroke="#eef1f3" stroke-width="1" fill="none"/></svg>
<div class="t ui" style="left:793px;top:341px;font-size:6.9px;color:#eef1f3;letter-spacing:-0.457px;">Export</div>
<svg class="a" style="left:813.8px;top:343.1px;" width="3.6" height="2.3" viewBox="0 0 3.6 2.3"><path d="M0 0H3.6L1.8 2.3Z" fill="#dfe5ea"/></svg>
<div class="sep" style="left:820px;top:338px;height:9px"></div>
<svg class="a" style="left:824px;top:338px;" width="10" height="9" viewBox="0 0 10 9"><rect x="2.5" y="1" width="7" height="7.5" fill="#f2f4f5"/><circle cx="3" cy="3" r="2.6" fill="#c4283a"/><path d="M1.8 1.8L4.2 4.2M4.2 1.8L1.8 4.2" stroke="#fff" stroke-width="0.9"/></svg>
<div class="sep" style="left:838px;top:338px;height:9px"></div>
<svg class="a" style="left:842px;top:338px;" width="9" height="9" viewBox="0 0 9 9"><path d="M7.5 0.5L4.5 4" stroke="#c9a25a" stroke-width="1.3"/><path d="M1 6.5L4 3.2L6 5L3 8.3Z" fill="#e3c04a"/></svg>
<svg class="a" style="left:1017px;top:338.5px;" width="9" height="8" viewBox="0 0 9 8"><circle cx="4.5" cy="4" r="3.6" fill="#3f8fd6"/><circle cx="4.5" cy="4" r="1.5" fill="#51616e"/></svg>
<div class="t ui" style="left:1028px;top:341px;font-size:6.9px;color:#eef1f3;letter-spacing:-0.419px;">Publish</div>
<svg class="a" style="left:1052.3px;top:343.1px;" width="3.6" height="2.3" viewBox="0 0 3.6 2.3"><path d="M0 0H3.6L1.8 2.3Z" fill="#dfe5ea"/></svg>
<div class="sep" style="left:1058px;top:338px;height:9px"></div>
<svg class="a" style="left:1062px;top:338px;" width="9" height="9" viewBox="0 0 9 9"><path d="M7.4 5.6A3.2 3.2 0 1 1 6.8 2.2" fill="none" stroke="#dfe5ea" stroke-width="1.6"/><path d="M5.2 0.2L8.8 1.2L6.6 4Z" fill="#dfe5ea"/></svg>
<div class="a" style="left:710px;top:349px;width:365px;height:243px;background:#fff;"></div>
<svg class="a pl" style="left:710px;top:349px;font-family:'Liberation Sans',sans-serif" width="365" height="243" viewBox="0 0 365 243"><rect x="33" y="22" width="100" height="191.5" fill="#ebebeb"/><path d="M33 49.2H133" stroke="#f5f5f5" stroke-width="0.6"/><path d="M33 94.75H133" stroke="#f5f5f5" stroke-width="0.6"/><path d="M33 140.25H133" stroke="#f5f5f5" stroke-width="0.6"/><path d="M33 185.9H133" stroke="#f5f5f5" stroke-width="0.6"/><path d="M33 26.4H133" stroke="#fff" stroke-width="1"/><path d="M33 72H133" stroke="#fff" stroke-width="1"/><path d="M33 117.5H133" stroke="#fff" stroke-width="1"/><path d="M33 163H133" stroke="#fff" stroke-width="1"/><path d="M33 208.8H133" stroke="#fff" stroke-width="1"/><path d="M61.4 22V213.5" stroke="#fff" stroke-width="1"/><path d="M106.7 22V213.5" stroke="#fff" stroke-width="1"/><path d="M30.8 26.4H33" stroke="#555" stroke-width="0.7"/><text x="29.5" y="28.7" font-size="6.9" fill="#444" text-anchor="end">1.0</text><path d="M30.8 72H33" stroke="#555" stroke-width="0.7"/><text x="29.5" y="74.3" font-size="6.9" fill="#444" text-anchor="end">0.5</text><path d="M30.8 117.5H33" stroke="#555" stroke-width="0.7"/><text x="29.5" y="119.8" font-size="6.9" fill="#444" text-anchor="end">0.0</text><path d="M30.8 163H33" stroke="#555" stroke-width="0.7"/><text x="29.5" y="165.3" font-size="6.9" fill="#444" text-anchor="end">-0.5</text><path d="M30.8 208.8H33" stroke="#555" stroke-width="0.7"/><text x="29.5" y="211.1" font-size="6.9" fill="#444" text-anchor="end">-1.0</text><path d="M61.4 213.5V215.7" stroke="#555" stroke-width="0.7"/><text x="61.4" y="223.6" font-size="6.9" fill="#444" text-anchor="middle">B</text><path d="M106.7 213.5V215.7" stroke="#555" stroke-width="0.7"/><text x="106.7" y="223.6" font-size="6.9" fill="#444" text-anchor="middle">NK</text><text x="33" y="16" font-size="10.4" fill="#000">B Cell Top10gene</text><text x="83" y="234" font-size="8.3" fill="#1a1a1a" text-anchor="middle">Celltype</text><text transform="translate(15 118) rotate(-90)" font-size="8.3" fill="#1a1a1a" text-anchor="middle">Expression</text><path d="M61.4 30.6V48.7M61.4 89V145" stroke="#333" stroke-width="0.8"/><rect x="44.6" y="48.7" width="34.4" height="40.3" fill="#f4a09a" stroke="#333" stroke-width="0.8"/><path d="M44.6 63.7H79" stroke="#333" stroke-width="1.3"/><circle cx="61.4" cy="148.5" r="1.25" fill="#222"/><circle cx="61.4" cy="152" r="1.25" fill="#222"/><circle cx="61.4" cy="155" r="1.25" fill="#222"/><circle cx="61.4" cy="157.5" r="1.25" fill="#222"/><circle cx="61.4" cy="160.5" r="1.25" fill="#222"/><circle cx="61.4" cy="163" r="1.25" fill="#222"/><circle cx="61.4" cy="166" r="1.25" fill="#222"/><circle cx="61.4" cy="169" r="1.25" fill="#222"/><circle cx="61.4" cy="172.5" r="1.25" fill="#222"/><circle cx="61.4" cy="196" r="1.25" fill="#222"/><path d="M90.4 202.5H123.5" stroke="#222" stroke-width="1.4"/><circle cx="106.7" cy="188.5" r="1.2" fill="#222"/><circle cx="106.7" cy="191" r="1.2" fill="#222"/><circle cx="106.7" cy="193.5" r="1.2" fill="#222"/><circle cx="106.7" cy="196" r="1.2" fill="#222"/><circle cx="106.7" cy="198.5" r="1.2" fill="#222"/><circle cx="106.7" cy="200.5" r="1.2" fill="#222"/><circle cx="106.7" cy="202.5" r="1.2" fill="#222"/><circle cx="106.7" cy="204.5" r="1.2" fill="#222"/><text x="146" y="106.5" font-size="8.3" fill="#1a1a1a">celltype</text><rect x="147" y="111.5" width="13" height="13" fill="#f2f2f2"/><path d="M153.5 112.8V123.2" stroke="#333" stroke-width="0.7"/><rect x="148.5" y="114.5" width="10" height="7" fill="#f4a09a" stroke="#333" stroke-width="0.7"/><path d="M148.5 118H158.5" stroke="#333" stroke-width="0.7"/><text x="164" y="120.5" font-size="6.6" fill="#1a1a1a">B</text><rect x="147" y="125" width="13" height="13" fill="#f2f2f2"/><path d="M153.5 126.3V136.7" stroke="#333" stroke-width="0.7"/><rect x="148.5" y="128" width="10" height="7" fill="#56cfd2" stroke="#333" stroke-width="0.7"/><path d="M148.5 131.5H158.5" stroke="#333" stroke-width="0.7"/><text x="164" y="134" font-size="6.6" fill="#1a1a1a">NK</text><rect x="213" y="22" width="98.8" height="191.5" fill="#ebebeb"/><path d="M213 49.75H311.8" stroke="#f5f5f5" stroke-width="0.6"/><path d="M213 94.95H311.8" stroke="#f5f5f5" stroke-width="0.6"/><path d="M213 139.9H311.8" stroke="#f5f5f5" stroke-width="0.6"/><path d="M213 184.85H311.8" stroke="#f5f5f5" stroke-width="0.6"/><path d="M213 27H311.8" stroke="#fff" stroke-width="1"/><path d="M213 72.5H311.8" stroke="#fff" stroke-width="1"/><path d="M213 117.4H311.8" stroke="#fff" stroke-width="1"/><path d="M213 162.4H311.8" stroke="#fff" stroke-width="1"/><path d="M213 207.3H311.8" stroke="#fff" stroke-width="1"/><path d="M239.6 22V213.5" stroke="#fff" stroke-width="1"/><path d="M285.4 22V213.5" stroke="#fff" stroke-width="1"/><path d="M210.8 27H213" stroke="#555" stroke-width="0.7"/><text x="209.5" y="29.3" font-size="6.9" fill="#444" text-anchor="end">1.0</text><path d="M210.8 72.5H213" stroke="#555" stroke-width="0.7"/><text x="209.5" y="74.8" font-size="6.9" fill="#444" text-anchor="end">0.5</text><path d="M210.8 117.4H213" stroke="#555" stroke-width="0.7"/><text x="209.5" y="119.7" font-size="6.9" fill="#444" text-anchor="end">0.0</text><path d="M210.8 162.4H213" stroke="#555" stroke-width="0.7"/><text x="209.5" y="164.7" font-size="6.9" fill="#444" text-anchor="end">-0.5</text><path d="M210.8 207.3H213" stroke="#555" stroke-width="0.7"/><text x="209.5" y="209.6" font-size="6.9" fill="#444" text-anchor="end">-1.0</text><path d="M239.6 213.5V215.7" stroke="#555" stroke-width="0.7"/><text x="239.6" y="223.6" font-size="6.9" fill="#444" text-anchor="middle">B</text><path d="M285.4 213.5V215.7" stroke="#555" stroke-width="0.7"/><text x="285.4" y="223.6" font-size="6.9" fill="#444" text-anchor="middle">NK</text><text x="213" y="16" font-size="10.05" fill="#000">B cell bottom10gene</text><text x="262.5" y="234" font-size="8.3" fill="#1a1a1a" text-anchor="middle">Celltype</text><text transform="translate(193 118) rotate(-90)" font-size="8.3" fill="#1a1a1a" text-anchor="middle">Expression</text><path d="M285.4 30.6V34M285.4 60V85.7" stroke="#333" stroke-width="0.8"/><rect x="267.8" y="34" width="34.8" height="26" fill="#56cfd2" stroke="#333" stroke-width="0.8"/><path d="M267.8 47.8H302.6" stroke="#333" stroke-width="1.3"/><circle cx="285.4" cy="102.5" r="1.25" fill="#222"/><circle cx="285.4" cy="107.3" r="1.25" fill="#222"/><circle cx="285.4" cy="121.5" r="1.25" fill="#222"/><circle cx="285.4" cy="123.3" r="1.25" fill="#222"/><circle cx="285.4" cy="138.6" r="1.25" fill="#222"/><path d="M239.6 172.5V191.4" stroke="#333" stroke-width="0.8"/><rect x="222.9" y="191.4" width="33.9" height="12.4" fill="#f4a09a" stroke="#333" stroke-width="0.8"/><path d="M222.9 202.7H256.8" stroke="#333" stroke-width="1.3"/><circle cx="239.6" cy="122.7" r="1.25" fill="#222"/><circle cx="239.6" cy="145.6" r="1.25" fill="#222"/><circle cx="239.6" cy="150.5" r="1.25" fill="#222"/><circle cx="239.6" cy="154.9" r="1.25" fill="#222"/><circle cx="239.6" cy="158.4" r="1.25" fill="#222"/><circle cx="239.6" cy="167.5" r="1.25" fill="#222"/><circle cx="239.6" cy="169" r="1.25" fill="#222"/><circle cx="239.6" cy="170.5" r="1.25" fill="#222"/><circle cx="239.6" cy="172" r="1.25" fill="#222"/><circle cx="239.6" cy="173.5" r="1.25" fill="#222"/><text x="325" y="106.5" font-size="8.3" fill="#1a1a1a">celltype</text><rect x="326" y="111.5" width="13" height="13" fill="#f2f2f2"/><path d="M332.5 112.8V123.2" stroke="#333" stroke-width="0.7"/><rect x="327.5" y="114.5" width="10" height="7" fill="#f4a09a" stroke="#333" stroke-width="0.7"/><path d="M327.5 118H337.5" stroke="#333" stroke-width="0.7"/><text x="343" y="120.5" font-size="6.6" fill="#1a1a1a">B</text><rect x="326" y="125" width="13" height="13" fill="#f2f2f2"/><path d="M332.5 126.3V136.7" stroke="#333" stroke-width="0.7"/><rect x="327.5" y="128" width="10" height="7" fill="#56cfd2" stroke="#333" stroke-width="0.7"/><path d="M327.5 131.5H337.5" stroke="#333" stroke-width="0.7"/><text x="343" y="134" font-size="6.6" fill="#1a1a1a">NK</text></svg>
</body></html>
